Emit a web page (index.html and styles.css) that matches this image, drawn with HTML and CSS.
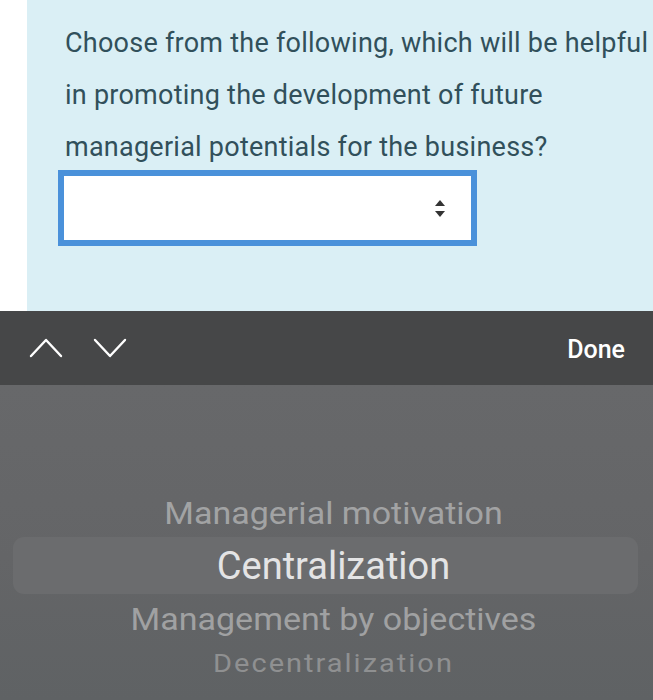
FILE: index.html
```html
<!DOCTYPE html>
<html>
<head>
<meta charset="utf-8">
<link rel="stylesheet" href="styles.css">
</head>
<body>
<div class="screen">
  <section class="question">
    <p class="prompt">Choose from the following, which will be helpful<br>in promoting the development of future<br>managerial potentials for the business?</p>
    <div class="select">
      <svg class="select-arrow" width="12" height="19" viewBox="0 0 12 19"><path d="M6 1 L11 7 H1 Z" fill="#333"/><path d="M1 12 H11 L6 18 Z" fill="#333"/></svg>
    </div>
  </section>
  <div class="toolbar">
    <div class="nav">
      <svg class="chev" width="34" height="22" viewBox="0 0 34 22"><path d="M2 19 L17 3 L32 19" fill="none" stroke="#fff" stroke-width="2.4" stroke-linecap="round" stroke-linejoin="round"/></svg>
      <svg class="chev" width="34" height="22" viewBox="0 0 34 22"><path d="M2 3 L17 19 L32 3" fill="none" stroke="#fff" stroke-width="2.4" stroke-linecap="round" stroke-linejoin="round"/></svg>
    </div>
    <span class="done">Done</span>
  </div>
  <div class="picker">
    <div class="row row-above"><span>Managerial motivation</span></div>
    <div class="row row-selected"><span>Centralization</span></div>
    <div class="row row-below"><span>Management by objectives</span></div>
    <div class="row row-far"><span>Decentralization</span></div>
  </div>
</div>
</body>
</html>
```
FILE: styles.css
```css
html, body {
  margin: 0;
  padding: 0;
  background: #ffffff;
}
.screen {
  width: 653px;
  height: 700px;
  overflow: hidden;
  font-family: Roboto, "Liberation Sans", sans-serif;
  display: flex;
  flex-direction: column;
}
.question {
  margin-left: 27px;
  height: 311px;
  box-sizing: border-box;
  background: #daeff5;
  padding: 17px 0 0 38px;
  flex: none;
}
.prompt {
  margin: 0;
  font-size: 27px;
  letter-spacing: 0.25px;
  line-height: 52px;
  color: #31505b;
  white-space: nowrap;
}
.select {
  margin: -3px 0 0 -7px;
  width: 419px;
  height: 76px;
  box-sizing: border-box;
  border: 6px solid #4a91da;
  background: #ffffff;
  display: flex;
  align-items: center;
  justify-content: flex-end;
  padding-right: 25px;
}
.select-arrow {
  display: block;
}
.toolbar {
  flex: none;
  height: 74px;
  background: #464748;
  display: flex;
  align-items: center;
  justify-content: space-between;
  padding: 2px 28px 0 29px;
  box-sizing: border-box;
}
.nav {
  display: flex;
  gap: 30px;
  align-items: center;
  margin-top: -2px;
}
.chev {
  display: block;
}
.done {
  color: #ffffff;
  font-size: 25px;
  font-weight: 500;
}
.picker {
  flex: 1;
  background: linear-gradient(180deg, #67686a 0%, #646567 55%, #5f6264 100%);
  padding-top: 103px;
  display: flex;
  flex-direction: column;
}
.row {
  display: flex;
  align-items: center;
  justify-content: center;
  white-space: nowrap;
  padding-left: 14px;
}
.row-above {
  height: 49px;
  font-size: 34px;
  color: #a2a3a4;
}
.row-above span,
.row-below span {
  display: inline-block;
  transform: scaleY(0.94);
}
.row-selected {
  height: 57px;
  margin: 0 15px 0 13px;
  padding-left: 16px;
  border-radius: 11px;
  background: #6b6c6e;
  font-size: 38px;
  color: #e4e4e5;
}
.row-below {
  height: 50px;
  font-size: 34px;
  color: #a0a1a2;
}
.row-far {
  height: 38px;
  font-size: 29px;
  color: #8f9091;
}
.row-far span {
  display: inline-block;
  transform: scaleY(0.88);
  letter-spacing: 2px;
}
```
